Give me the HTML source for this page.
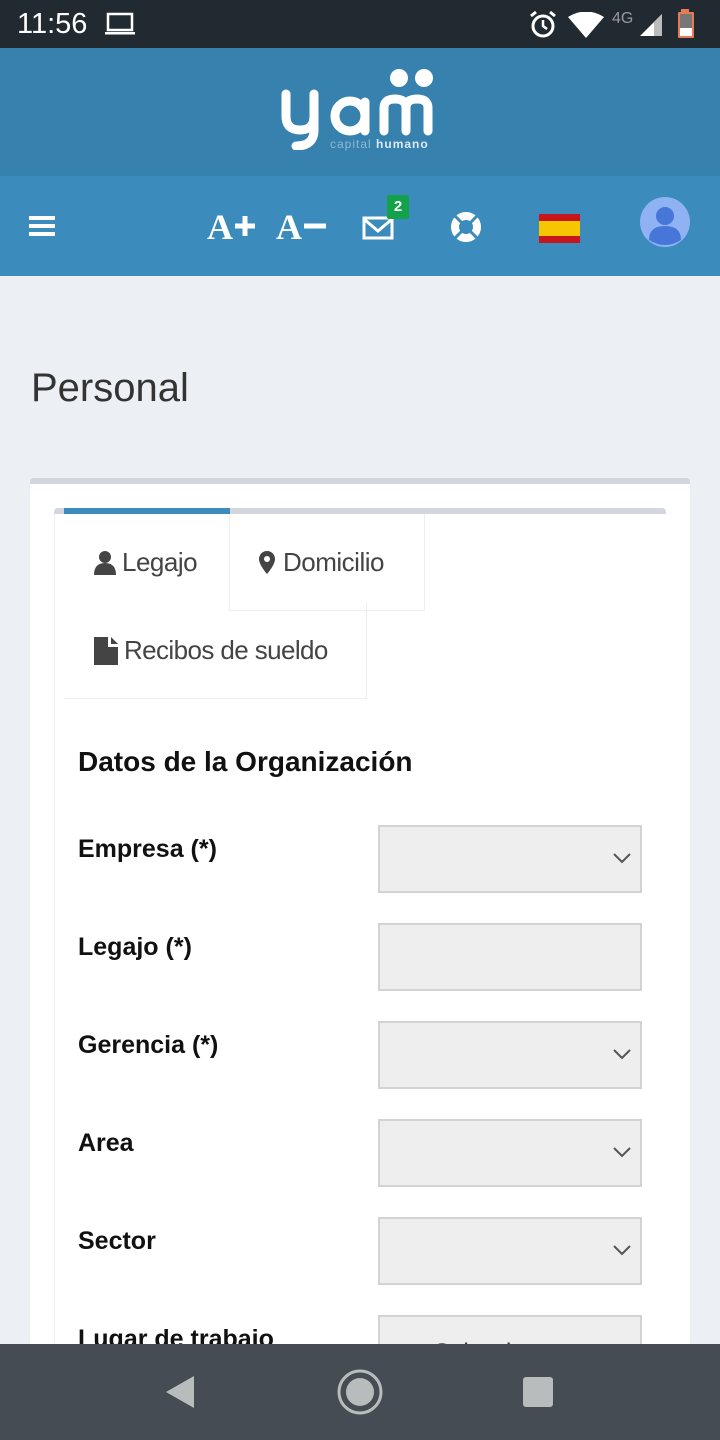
<!DOCTYPE html>
<html><head><meta charset="utf-8"><style>
*{margin:0;padding:0;box-sizing:border-box}
body{width:720px;height:1440px;overflow:hidden;background:#eceff4;font-family:"Liberation Sans","DejaVu Sans",sans-serif;position:relative}
.abs{position:absolute}
.sb{top:0;left:0;width:720px;height:48px;background:#222a31;color:#fff}
.hdr{top:48px;left:0;width:720px;height:128px;background:#3681ad}
.nav{top:176px;left:0;width:720px;height:100px;background:#3b8bbd}
.card{top:478px;left:30px;width:660px;height:900px;background:#fff;border-top:6px solid #d2d6de;border-radius:3px}
.tabs{top:508px;left:54px;width:612px;height:900px;background:#fff;border-left:1px solid #f0f0f0;border-radius:4px}
.lbl{left:78px;font-size:25px;font-weight:bold;color:#111}
.inp{left:378px;width:264px;height:68px;background:#eeeeee;border:2px solid #d3d3d3}
.chev{position:absolute;right:8px;top:24px}
.bot{top:1344px;left:0;width:720px;height:96px;background:#454c53}
</style></head><body>
<div class="abs sb">
<div class="abs" style="left:17px;top:8px;font-size:29px">11:56</div>
<svg class="abs" style="left:104px;top:12px" width="32" height="24"><rect x="4" y="2" width="24" height="16" fill="none" stroke="#fff" stroke-width="2.5"/><rect x="1" y="20" width="30" height="2.5" fill="#fff"/></svg>
<svg class="abs" style="left:528px;top:10px" width="30" height="30"><circle cx="15" cy="16" r="10" fill="none" stroke="#fff" stroke-width="3"/><path d="M15 10v6l4 3" stroke="#fff" stroke-width="2.5" fill="none"/><path d="M3 6l5-4M27 6l-5-4" stroke="#fff" stroke-width="3"/></svg>
<svg class="abs" style="left:568px;top:12px" width="36" height="26"><path d="M0 5Q18-6 36 5L18 26Z" fill="#fff"/></svg>
<div class="abs" style="left:612px;top:10px;font-size:16px;color:#999">4G</div>
<svg class="abs" style="left:638px;top:12px" width="26" height="26"><path d="M24 2V24H2Z" fill="#fff"/><path d="M24 2V24H16V10Z" fill="#bbb"/></svg>
<svg class="abs" style="left:676px;top:8px" width="24" height="32"><rect x="5" y="1" width="8" height="4" fill="#e87a55"/><rect x="2" y="4" width="16" height="26" fill="#e87a55" rx="1"/><rect x="4" y="6" width="12" height="14" fill="#777"/><rect x="4" y="20" width="12" height="8" fill="#fff"/></svg>
</div>
<div class="abs hdr">
<svg class="abs" style="left:278px;top:18px" width="164" height="84"><g fill="none" stroke="#fff" stroke-width="9" stroke-linecap="round"><path d="M8 28v22q0 14 14 14q14 0 14-14V28"/><path d="M36 50v14q0 16-18 16"/><circle cx="72" cy="50" r="15"/><path d="M87 36v29"/><path d="M106 65V42q0-9 11-9q11 0 11 9v23"/><path d="M128 42q0-9 11-9q11 0 11 9v23"/></g><circle cx="121" cy="12" r="9" fill="#fff"/><circle cx="146" cy="12" r="9" fill="#fff"/></svg>
<div class="abs" style="left:330px;top:89px;font-size:12px;color:#8fb9d6;letter-spacing:1px">capital <b style="color:#dbe9f3">humano</b></div>
</div>
<div class="abs nav">
<svg class="abs" style="left:29px;top:40px" width="26" height="20"><rect y="0" width="26" height="4" fill="#fff"/><rect y="8" width="26" height="4" fill="#fff"/><rect y="16" width="26" height="4" fill="#fff"/></svg>
<div class="abs" style="left:207px;top:30px;font-size:36px;font-weight:bold;color:#fff;font-family:'Liberation Serif',serif">A</div>
<svg class="abs" style="left:233px;top:38px" width="24" height="24"><path d="M12 2v20M2 12h20" stroke="#fff" stroke-width="5"/></svg>
<div class="abs" style="left:276px;top:30px;font-size:36px;font-weight:bold;color:#fff;font-family:'Liberation Serif',serif">A</div>
<svg class="abs" style="left:302px;top:38px" width="24" height="24"><path d="M2 12h22" stroke="#fff" stroke-width="5"/></svg>
<svg class="abs" style="left:362px;top:38px" width="32" height="28"><rect x="2" y="4" width="28" height="20" fill="none" stroke="#fff" stroke-width="3"/><path d="M3 6l13 11 13-11" fill="none" stroke="#fff" stroke-width="3"/></svg>
<div class="abs" style="left:387px;top:19px;width:22px;height:24px;background:#13a14a;color:#fff;font-size:15px;font-weight:bold;text-align:center;line-height:24px;border-radius:2px">2</div>
<svg class="abs" style="left:450px;top:35px" width="32" height="32"><circle cx="16" cy="16" r="11" fill="none" stroke="#fff" stroke-width="8"/><path d="M5 5l7 7M27 5l-7 7M5 27l7-7M27 27l-7-7" stroke="#3b8bbd" stroke-width="3"/></svg>
<div class="abs" style="left:539px;top:38px;width:41px;height:29px;background:#c8151b"><div style="margin-top:7px;height:15px;background:#f6c700"></div></div>
<svg class="abs" style="left:639px;top:20px" width="52" height="52"><circle cx="26" cy="26" r="25" fill="#8eb2f4"/><circle cx="26" cy="20" r="9" fill="#4776d9"/><path d="M10 44Q10 30 26 30Q42 30 42 44Q26 54 10 44Z" fill="#4776d9"/></svg>
</div>
<div class="abs" style="left:31px;top:366px;font-size:40px;color:#333">Personal</div>
<div class="abs card"></div>
<div class="abs tabs"></div>
<div class="abs" style="left:54px;top:508px;width:612px;height:6px;background:#d2d6de;border-radius:4px 4px 0 0"></div>
<div class="abs" style="left:64px;top:508px;width:166px;height:6px;background:#3b8bbd"></div>
<div class="abs" style="left:229px;top:514px;width:196px;height:97px;border:1px solid #eee;border-top:none"></div>
<div class="abs" style="left:366px;top:603px;width:1px;height:96px;background:#eee"></div>
<div class="abs" style="left:64px;top:698px;width:303px;height:1px;background:#eee"></div>
<svg class="abs" style="left:94px;top:550px" width="24" height="26"><circle cx="11" cy="7" r="6" fill="#444"/><path d="M0 25Q0 13 11 13Q22 13 22 25Z" fill="#444"/></svg>
<div class="abs" style="left:122px;top:547px;font-size:26px;color:#444;letter-spacing:-0.5px">Legajo</div>
<svg class="abs" style="left:259px;top:550px" width="18" height="26"><path d="M8 1C3 1 0 5 0 9c0 6 8 15 8 15s8-9 8-15c0-4-3-8-8-8z" fill="#444"/><circle cx="8" cy="9" r="3" fill="#fff"/></svg>
<div class="abs" style="left:283px;top:547px;font-size:26px;color:#444;letter-spacing:-0.5px">Domicilio</div>
<svg class="abs" style="left:94px;top:637px" width="26" height="28"><path d="M0 0H14V10H24V28H0Z" fill="#444"/><path d="M17 0L24 7H17Z" fill="#444"/></svg>
<div class="abs" style="left:124px;top:635px;font-size:26px;color:#444;letter-spacing:-0.6px">Recibos de sueldo</div>
<div class="abs" style="left:78px;top:746px;font-size:28px;font-weight:bold;color:#111">Datos de la Organización</div>
<div class="abs lbl" style="top:835px">Empresa (*)</div>
<div class="abs inp" style="top:825px"><svg class="chev" width="20" height="14"><path d="M2 3l8 8 8-8" fill="none" stroke="#555" stroke-width="2"/></svg></div>
<div class="abs lbl" style="top:933px">Legajo (*)</div>
<div class="abs inp" style="top:923px"></div>
<div class="abs lbl" style="top:1031px">Gerencia (*)</div>
<div class="abs inp" style="top:1021px"><svg class="chev" width="20" height="14"><path d="M2 3l8 8 8-8" fill="none" stroke="#555" stroke-width="2"/></svg></div>
<div class="abs lbl" style="top:1129px">Area</div>
<div class="abs inp" style="top:1119px"><svg class="chev" width="20" height="14"><path d="M2 3l8 8 8-8" fill="none" stroke="#555" stroke-width="2"/></svg></div>
<div class="abs lbl" style="top:1227px">Sector</div>
<div class="abs inp" style="top:1217px"><svg class="chev" width="20" height="14"><path d="M2 3l8 8 8-8" fill="none" stroke="#555" stroke-width="2"/></svg></div>
<div class="abs lbl" style="top:1325px">Lugar de trabajo</div>
<div class="abs inp" style="top:1315px"><div style="margin:22px 0 0 54px;font-size:24px;color:#333">Seleccione</div></div>
<div class="abs bot">
<svg class="abs" style="left:164px;top:30px" width="32" height="36"><path d="M30 2V34L2 18Z" fill="#b8bcbd"/></svg>
<svg class="abs" style="left:337px;top:25px" width="46" height="46"><circle cx="23" cy="23" r="21" fill="none" stroke="#b8bcbd" stroke-width="3"/><circle cx="23" cy="23" r="14" fill="#b8bcbd"/></svg>
<div class="abs" style="left:523px;top:33px;width:30px;height:30px;background:#b8bcbd;border-radius:3px"></div>
</div>
</body></html>
